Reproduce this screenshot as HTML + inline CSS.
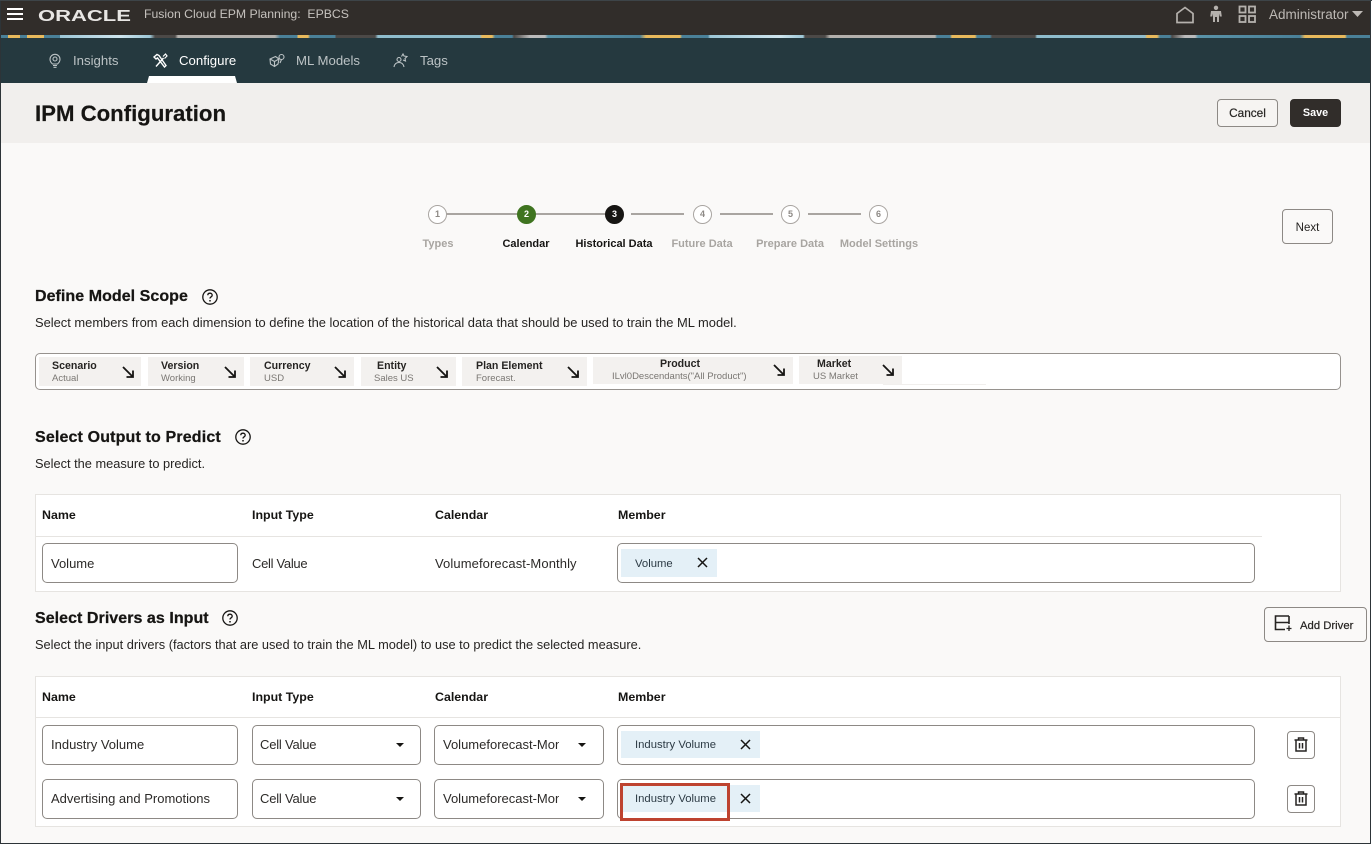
<!DOCTYPE html>
<html lang="en">
<head>
<meta charset="utf-8">
<title>IPM Configuration</title>
<style>
html,body{margin:0;padding:0}
body{width:1372px;height:844px;position:relative;overflow:hidden;background:#FAF9F8;font-family:"Liberation Sans",sans-serif;color:#161513}
.a,.t,svg.i{position:absolute}
.t{white-space:nowrap;line-height:16px;transform:translateY(-8px)}
.c{transform:translate(-50%,-8px);text-align:center}
.box{position:absolute;box-sizing:border-box;background:#fff;border:1px solid #8d8985;border-radius:5px}
.btn{position:absolute;box-sizing:border-box;border:1px solid #8d8985;border-radius:4px;background:#FAF9F8;font-size:12px;font-weight:bold;text-align:center;color:#262422}
.chip{position:absolute;background:#E4F0F7}
.h2{font-size:16px;font-weight:bold;letter-spacing:.05px;-webkit-text-stroke:.25px #161513}
.d{font-size:12.9px;color:#262422}
.th{font-size:12.4px;font-weight:bold}
.v{font-size:13px;color:#2c2a28}
.nav{font-size:13.2px;color:#bcc3c5}
.st{font-size:11px;font-weight:bold;color:#a8a5a1}
.on{color:#161513}
.n{position:absolute;box-sizing:border-box;width:19px;height:19px;border-radius:50%;background:#fff;border:1px solid #a9a5a1;font-size:9px;font-weight:bold;color:#8d8985;text-align:center;line-height:17px;top:205px}
.l{position:absolute;height:2px;top:213px;background:#a9a5a1}
.sc{position:absolute;background:#F3F1EF;top:357px;height:29px}
.sa{font-size:10.6px;font-weight:bold;color:#262422}
.sb{font-size:9.5px;color:#7a7773}
.ch{font-size:11.3px;color:#2c3a44}
</style>
</head>
<body>

<!-- top bar -->
<div class="a" style="left:0;top:0;width:1372px;height:35px;background:#312D2A"></div>
<div class="a" style="left:0;top:35px;width:1372px;height:3px;background:linear-gradient(90deg,#4a8098 0,#4a8098 8px,#e8b95c 8px,#e8b95c 20px,#4a8098 20px,#4a8098 27px,#e8b95c 27px,#e8b95c 44px,#4a8098 44px,#4a8098 60px,#9cc6d6 60px,#cfe5ee 120px,#9cc6d6 150px,#4c4947 155px,#4c4947 175px,#b3b0ac 178px,#b3b0ac 275px,#4a8098 280px,#4a8098 297px,#e8b95c 298px,#e8b95c 308px,#4a8098 310px,#4a8098 335px,#4c4947 336px,#4c4947 375px,#8fbccc 378px,#8fbccc 480px,#e8b95c 482px,#e8b95c 492px,#4a8098 495px,#4a8098 512px,#4c4947 514px,#bbb 530px,#bbb 545px,#5a93a8 548px,#4a8098 640px,#e8b95c 646px,#e8b95c 680px,#4a8098 682px,#4a8098 708px,#9cc6d6 710px,#cfe5ee 780px,#9cc6d6 803px,#4c4947 805px,#4c4947 825px,#b3b0ac 830px,#b3b0ac 935px,#4a8098 937px,#4a8098 950px,#e8b95c 952px,#e8b95c 975px,#4a8098 977px,#4a8098 990px,#4c4947 992px,#4c4947 1035px,#8fbccc 1037px,#8fbccc 1145px,#e8b95c 1147px,#e8b95c 1157px,#4a8098 1160px,#4a8098 1170px,#4c4947 1172px,#bbb 1185px,#bbb 1195px,#5a93a8 1198px,#4a8098 1300px,#e8b95c 1305px,#e8b95c 1345px,#4a8098 1347px)"></div>
<div class="a" style="left:7px;top:8px;width:16px;height:2px;background:#fff"></div>
<div class="a" style="left:7px;top:13px;width:16px;height:2px;background:#fff"></div>
<div class="a" style="left:7px;top:18px;width:16px;height:2px;background:#fff"></div>
<div class="t" style="left:38px;top:17px;font-size:15.5px;font-weight:bold;color:#e8e6e4;transform:translateY(-8px) scaleX(1.42);transform-origin:left center">ORACLE</div>
<div class="t" style="left:144px;top:14px;font-size:12.25px;color:#c6c2be">Fusion Cloud EPM Planning:&nbsp; EPBCS</div>
<svg class="i" style="left:1175px;top:6px" width="20" height="18" viewBox="0 0 20 18" fill="none" stroke="#b5b1ad" stroke-width="1.7"><path d="M2 16.500V7.500L10 1.500 18 7.500V16.500Z"/></svg>
<svg class="i" style="left:1209px;top:5px" width="14" height="18" viewBox="0 0 14 18" fill="#b5b1ad"><circle cx="7" cy="2.800" r="2.200"/><path d="M2 6h10l.8 5.500h-2L10 8.500V17H8V12H6v5H4V8.500L3.200 11.500H1.200Z"/></svg>
<svg class="i" style="left:1238px;top:5px" width="18" height="18" viewBox="0 0 18 18" fill="none" stroke="#b5b1ad" stroke-width="1.800"><rect x="1.500" y="1.500" width="6" height="6"/><rect x="11" y="1.500" width="6" height="6"/><rect x="1.500" y="11" width="6" height="6"/><rect x="11" y="11" width="6" height="6"/></svg>
<div class="t" style="left:1269px;top:15px;font-size:13.5px;color:#bdb9b5">Administrator</div>
<svg class="i" style="left:1352px;top:11px" width="11" height="6" viewBox="0 0 11 6" fill="#bdb9b5"><path d="M0 0H11L5.500 6Z"/></svg>

<!-- nav -->
<div class="a" style="left:0;top:38px;width:1372px;height:45px;background:#25393F"></div>
<svg class="i" style="left:48px;top:53px" width="14" height="15" viewBox="0 0 14 15" fill="none" stroke="#bcc3c5" stroke-width="1.100"><path d="M4.500 11C3 9.800 2 8.300 2 6.300A5 5 0 0 1 12 6.300C12 8.300 11 9.800 9.500 11ZM5 12.500H9M5.500 14.300H8.500"/><circle cx="7" cy="6" r="2"/></svg>
<div class="t nav" style="left:73px;top:61px">Insights</div>
<svg class="i" style="left:153px;top:53px" width="15" height="15" viewBox="0 0 15 15" fill="none" stroke="#fff" stroke-width="1.400"><path d="M3 13.500L10.500 5M1 4L4 1.500 6 2.500 13 12.500 11.500 14 4.500 5 3 6Z"/><path d="M10 3.500L12.500 1 14 3 11.500 5.500" stroke-width="1.200"/></svg>
<div class="t nav" style="left:179px;top:61px;color:#fff">Configure</div>
<div class="a" style="left:147px;top:76px;width:90px;height:7px;background:#fff;clip-path:polygon(2px 0,88px 0,90px 100%,0 100%)"></div>
<svg class="i" style="left:269px;top:53px" width="16" height="15" viewBox="0 0 16 15" fill="none" stroke="#bcc3c5" stroke-width="1.100"><path d="M1 6L6.500 3.500 10 6 9 11 5.500 13.500 1.500 11ZM1 6L5.500 8.500 10 6M5.500 8.500V13.500"/><circle cx="12.500" cy="4" r="2.500"/><path d="M12.500 6.500L11 10"/></svg>
<div class="t nav" style="left:296px;top:61px">ML Models</div>
<svg class="i" style="left:393px;top:53px" width="15" height="15" viewBox="0 0 15 15" fill="none" stroke="#bcc3c5" stroke-width="1.100"><circle cx="6" cy="6.500" r="2"/><path d="M1 14C1.500 11 3 9.500 6 9.500S10.500 11.500 11 14M8.500 3.500L10 1l1 2 3 .5-2 2 .5 2.500-2.500-1"/></svg>
<div class="t nav" style="left:420px;top:61px">Tags</div>

<!-- page header -->
<div class="a" style="left:0;top:83px;width:1372px;height:60px;background:#F1EFED"></div>
<div class="t" style="left:35px;top:114px;font-size:22.2px;font-weight:bold;line-height:28px;transform:translateY(-14px);-webkit-text-stroke:.2px #161513">IPM Configuration</div>
<div class="btn" style="left:1217px;top:99px;width:61px;height:28px;line-height:26px;background:#F6F4F2;font-weight:normal;font-size:11.8px;-webkit-text-stroke:.2px #262422">Cancel</div>
<div class="btn" style="left:1290px;top:99px;width:51px;height:28px;line-height:27px;background:#312D2A;border-color:#312D2A;color:#fff;font-size:10.8px">Save</div>

<!-- stepper -->
<div class="l" style="left:446px;width:72px"></div>
<div class="l" style="left:535px;width:71px"></div>
<div class="l" style="left:631px;width:53px"></div>
<div class="l" style="left:720px;width:53px"></div>
<div class="l" style="left:808px;width:53px"></div>
<div class="n" style="left:428px">1</div>
<div class="n" style="left:517px;background:#3F7420;border-color:#3F7420;color:#fff">2</div>
<div class="n" style="left:605px;background:#161513;border-color:#161513;color:#fff">3</div>
<div class="n" style="left:693px">4</div>
<div class="n" style="left:781px">5</div>
<div class="n" style="left:869px">6</div>
<div class="t c st" style="left:438px;top:244px">Types</div>
<div class="t c st on" style="left:526px;top:244px">Calendar</div>
<div class="t c st on" style="left:614px;top:244px">Historical Data</div>
<div class="t c st" style="left:702px;top:244px">Future Data</div>
<div class="t c st" style="left:790px;top:244px">Prepare Data</div>
<div class="t c st" style="left:879px;top:244px">Model Settings</div>
<div class="btn" style="left:1282px;top:209px;width:51px;height:35px;line-height:36px;font-weight:normal;font-size:11.500px">Next</div>

<!-- define scope -->
<div class="t h2" style="left:35px;top:297px">Define Model Scope</div>
<svg class="i" style="left:201px;top:288px" width="18" height="18" viewBox="0 0 18 18" fill="none" stroke="#161513" stroke-width="1.300"><circle cx="9" cy="9" r="7.200"/><path d="M6.800 7.200C6.800 5.900 7.800 5.200 9 5.200S11.200 6 11.200 7.200C11.200 8.800 9 8.800 9 10.500"/><path d="M9 12V13.500" stroke-width="1.500"/></svg>
<div class="t d" style="left:35px;top:323px">Select members from each dimension to define the location of the historical data that should be used to train the ML model.</div>

<div class="a" style="left:35px;top:353px;width:1306px;height:37px;box-sizing:border-box;background:#fff;border:1px solid #96928e;border-radius:5px"></div>
<div class="sc" style="left:39px;width:102px"></div>
<div class="sc" style="left:148px;width:96px"></div>
<div class="sc" style="left:250px;width:104px"></div>
<div class="sc" style="left:361px;width:95px"></div>
<div class="sc" style="left:462px;width:125px"></div>
<div class="sc" style="left:593px;width:200px;height:27px"></div>
<div class="sc" style="left:799px;width:103px;top:356px;height:28px"></div>
<div class="a" style="left:883px;top:384px;width:103px;height:1px;background:#F1EFED"></div>

<div class="t sa" style="left:52px;top:366px">Scenario</div><div class="t sb" style="left:52px;top:379px">Actual</div>
<div class="t sa" style="left:161px;top:366px">Version</div><div class="t sb" style="left:161px;top:379px">Working</div>
<div class="t sa" style="left:264px;top:366px">Currency</div><div class="t sb" style="left:264px;top:379px">USD</div>
<div class="t sa" style="left:377px;top:366px">Entity</div><div class="t sb" style="left:374px;top:379px">Sales US</div>
<div class="t sa" style="left:476px;top:366px">Plan Element</div><div class="t sb" style="left:476px;top:379px">Forecast.</div>
<div class="t sa" style="left:660px;top:364px">Product</div><div class="t sb" style="left:612px;top:377px">ILvl0Descendants("All Product")</div>
<div class="t sa" style="left:817px;top:364px">Market</div><div class="t sb" style="left:813px;top:377px">US Market</div>

<svg class="i" style="left:122px;top:366px" width="12" height="12" viewBox="0 0 12 12" fill="none" stroke="#161513" stroke-width="1.800"><path d="M1 1L11 11M11 4.500V11H4.500"/></svg>
<svg class="i" style="left:224px;top:366px" width="12" height="12" viewBox="0 0 12 12" fill="none" stroke="#161513" stroke-width="1.800"><path d="M1 1L11 11M11 4.500V11H4.500"/></svg>
<svg class="i" style="left:334px;top:366px" width="12" height="12" viewBox="0 0 12 12" fill="none" stroke="#161513" stroke-width="1.800"><path d="M1 1L11 11M11 4.500V11H4.500"/></svg>
<svg class="i" style="left:436px;top:366px" width="12" height="12" viewBox="0 0 12 12" fill="none" stroke="#161513" stroke-width="1.800"><path d="M1 1L11 11M11 4.500V11H4.500"/></svg>
<svg class="i" style="left:567px;top:366px" width="12" height="12" viewBox="0 0 12 12" fill="none" stroke="#161513" stroke-width="1.800"><path d="M1 1L11 11M11 4.500V11H4.500"/></svg>
<svg class="i" style="left:773px;top:364px" width="12" height="12" viewBox="0 0 12 12" fill="none" stroke="#161513" stroke-width="1.800"><path d="M1 1L11 11M11 4.500V11H4.500"/></svg>
<svg class="i" style="left:882px;top:364px" width="12" height="12" viewBox="0 0 12 12" fill="none" stroke="#161513" stroke-width="1.800"><path d="M1 1L11 11M11 4.500V11H4.500"/></svg>

<!-- output -->
<div class="t h2" style="left:35px;top:438px;letter-spacing:.15px">Select Output to Predict</div>
<svg class="i" style="left:234px;top:428px" width="18" height="18" viewBox="0 0 18 18" fill="none" stroke="#161513" stroke-width="1.300"><circle cx="9" cy="9" r="7.200"/><path d="M6.800 7.200C6.800 5.900 7.800 5.200 9 5.200S11.200 6 11.200 7.200C11.200 8.800 9 8.800 9 10.500"/><path d="M9 12V13.500" stroke-width="1.500"/></svg>
<div class="t d" style="left:35px;top:464px;font-size:12.8px">Select the measure to predict.</div>

<div class="a" style="left:35px;top:494px;width:1306px;height:98px;box-sizing:border-box;background:#fff;border:1px solid #E6E4E1"></div>
<div class="a" style="left:36px;top:536px;width:1226px;height:1px;background:#E6E4E1"></div>
<div class="t th" style="left:42px;top:515px">Name</div>
<div class="t th" style="left:252px;top:515px">Input Type</div>
<div class="t th" style="left:435px;top:515px">Calendar</div>
<div class="t th" style="left:618px;top:515px">Member</div>
<div class="box" style="left:42px;top:543px;width:196px;height:40px"></div>
<div class="t v" style="left:51px;top:564px">Volume</div>
<div class="t v" style="left:252px;top:564px;letter-spacing:-.3px">Cell Value</div>
<div class="t v" style="left:435px;top:564px;letter-spacing:.1px">Volumeforecast-Monthly</div>
<div class="box" style="left:617px;top:543px;width:638px;height:40px"></div>
<div class="chip" style="left:621px;top:549px;width:96px;height:28px"></div>
<div class="t ch" style="left:635px;top:564px">Volume</div>
<svg class="i" style="left:697px;top:557px" width="11" height="11" viewBox="0 0 11 11" stroke="#161513" stroke-width="1.500"><path d="M1 1L10 10M10 1L1 10"/></svg>

<!-- drivers -->
<div class="t h2" style="left:35px;top:619px">Select Drivers as Input</div>
<svg class="i" style="left:221px;top:609px" width="18" height="18" viewBox="0 0 18 18" fill="none" stroke="#161513" stroke-width="1.300"><circle cx="9" cy="9" r="7.200"/><path d="M6.800 7.200C6.800 5.900 7.800 5.200 9 5.200S11.200 6 11.200 7.200C11.200 8.800 9 8.800 9 10.500"/><path d="M9 12V13.500" stroke-width="1.500"/></svg>
<div class="t d" style="left:35px;top:645px;font-size:12.8px">Select the input drivers (factors that are used to train the ML model) to use to predict the selected measure.</div>
<div class="btn" style="left:1264px;top:607px;width:103px;height:35px"></div>
<svg class="i" style="left:1274px;top:615px" width="18" height="17" viewBox="0 0 18 17" fill="none" stroke="#262422" stroke-width="1.600"><path d="M15 1H1.500V14.500H11M1.500 7.500H15M15 1V9"/><path d="M15 10.500V16M12.500 13.500H17.500" stroke-width="1.300"/></svg>
<div class="t" style="left:1300px;top:626px;font-size:11.3px;-webkit-text-stroke:.2px #262422;color:#262422">Add Driver</div>

<div class="a" style="left:35px;top:676px;width:1306px;height:151px;box-sizing:border-box;background:#fff;border:1px solid #E6E4E1"></div>
<div class="a" style="left:36px;top:717px;width:1304px;height:1px;background:#E6E4E1"></div>
<div class="t th" style="left:42px;top:697px">Name</div>
<div class="t th" style="left:252px;top:697px">Input Type</div>
<div class="t th" style="left:435px;top:697px">Calendar</div>
<div class="t th" style="left:618px;top:697px">Member</div>

<!-- row 1 -->
<div class="box" style="left:42px;top:725px;width:196px;height:40px"></div>
<div class="t v" style="left:51px;top:745px">Industry Volume</div>
<div class="box" style="left:252px;top:725px;width:169px;height:40px"></div>
<div class="t v" style="left:260px;top:745px;letter-spacing:-.2px">Cell Value</div>
<svg class="i" style="left:396px;top:743px" width="8" height="4" viewBox="0 0 8 4" fill="#161513"><path d="M0 0H8L4 4Z"/></svg>
<div class="box" style="left:434px;top:725px;width:170px;height:40px"></div>
<div class="t v" style="left:443px;top:745px;width:116px;overflow:hidden">Volumeforecast-Monthly</div>
<svg class="i" style="left:578px;top:743px" width="8" height="4" viewBox="0 0 8 4" fill="#161513"><path d="M0 0H8L4 4Z"/></svg>
<div class="box" style="left:617px;top:725px;width:638px;height:40px"></div>
<div class="chip" style="left:621px;top:731px;width:139px;height:27px"></div>
<div class="t ch" style="left:635px;top:745px">Industry Volume</div>
<svg class="i" style="left:740px;top:739px" width="11" height="11" viewBox="0 0 11 11" stroke="#161513" stroke-width="1.500"><path d="M1 1L10 10M10 1L1 10"/></svg>
<div class="btn" style="left:1287px;top:731px;width:28px;height:28px;background:#fff"></div>
<svg class="i" style="left:1294px;top:737px" width="14" height="15" viewBox="0 0 14 15" fill="none" stroke="#262422" stroke-width="1.500"><path d="M0.500 3H13.500M4.500 3V1H9.500V3M2 3V14H12V3M5.500 6V11.500M8.500 6V11.500"/></svg>

<!-- row 2 -->
<div class="box" style="left:42px;top:779px;width:196px;height:40px"></div>
<div class="t v" style="left:51px;top:799px">Advertising and Promotions</div>
<div class="box" style="left:252px;top:779px;width:169px;height:40px"></div>
<div class="t v" style="left:260px;top:799px;letter-spacing:-.2px">Cell Value</div>
<svg class="i" style="left:396px;top:797px" width="8" height="4" viewBox="0 0 8 4" fill="#161513"><path d="M0 0H8L4 4Z"/></svg>
<div class="box" style="left:434px;top:779px;width:170px;height:40px"></div>
<div class="t v" style="left:443px;top:799px;width:116px;overflow:hidden">Volumeforecast-Monthly</div>
<svg class="i" style="left:578px;top:797px" width="8" height="4" viewBox="0 0 8 4" fill="#161513"><path d="M0 0H8L4 4Z"/></svg>
<div class="box" style="left:617px;top:779px;width:638px;height:40px"></div>
<div class="chip" style="left:621px;top:785px;width:139px;height:27px"></div>
<div class="t ch" style="left:635px;top:799px">Industry Volume</div>
<svg class="i" style="left:740px;top:793px" width="11" height="11" viewBox="0 0 11 11" stroke="#161513" stroke-width="1.500"><path d="M1 1L10 10M10 1L1 10"/></svg>
<div class="a" style="left:620px;top:783px;width:110px;height:38px;box-sizing:border-box;border:3px solid #BE4330"></div>
<div class="btn" style="left:1287px;top:785px;width:28px;height:28px;background:#fff"></div>
<svg class="i" style="left:1294px;top:791px" width="14" height="15" viewBox="0 0 14 15" fill="none" stroke="#262422" stroke-width="1.500"><path d="M0.500 3H13.500M4.500 3V1H9.500V3M2 3V14H12V3M5.500 6V11.500M8.500 6V11.500"/></svg>

<!-- screenshot frame -->
<div class="a" style="left:0;top:0;width:1px;height:844px;background:#2d3438"></div>
<div class="a" style="left:1370px;top:0;width:1px;height:844px;background:#2d3438"></div>
<div class="a" style="left:0;top:843px;width:1372px;height:1px;background:#2d3438"></div>
<div class="a" style="left:1371px;top:0;width:1px;height:844px;background:#fff"></div>
<div class="a" style="left:0;top:0;width:1372px;height:1px;background:#3d4448"></div>
</body>
</html>
